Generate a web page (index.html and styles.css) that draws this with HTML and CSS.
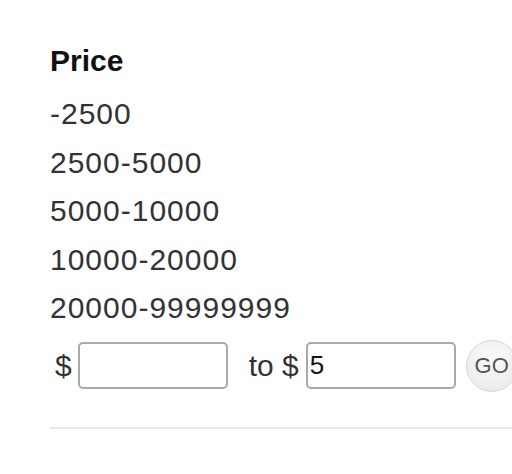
FILE: index.html
```html
<!DOCTYPE html>
<html lang="en">
<head>
    <meta charset="UTF-8">
    <title>Price filter</title>
    <link rel="stylesheet" href="styles.css">
</head>
<body>
    <div class="filter">
        <h3 class="filter-title">Price</h3>
        <ul class="price-list">
            <li><a href="#">-2500</a></li>
            <li><a href="#">2500-5000</a></li>
            <li><a href="#">5000-10000</a></li>
            <li><a href="#">10000-20000</a></li>
            <li><a href="#">20000-99999999</a></li>
        </ul>
        <form class="price-range">
            <span class="currency">$</span>
            <input type="text" class="range-input">
            <span class="to">to $</span>
            <input type="text" class="range-input" value="5">
            <button type="submit" class="go-btn">GO</button>
        </form>
        <div class="divider"></div>
    </div>
</body>
</html>
```

FILE: styles.css
```css
* {
    margin: 0;
    padding: 0;
    box-sizing: border-box;
}

body {
    font-family: "Liberation Sans", Arial, sans-serif;
    background: #fff;
    color: #333;
    overflow: hidden;
}

.filter {
    padding: 36px 0 0 50px;
}

.filter-title {
    font-size: 30px;
    font-weight: bold;
    line-height: 50px;
    margin-bottom: 4px;
    color: #111;
}

.price-list {
    list-style: none;
}

.price-list li {
    font-size: 30px;
    line-height: 48.5px;
    letter-spacing: 1px;
}

.price-list a {
    color: #333;
    text-decoration: none;
}

.price-range {
    display: flex;
    align-items: center;
    margin-top: 7px;
    font-size: 30px;
    white-space: nowrap;
}

.currency {
    margin-left: 5px;
    margin-right: 6px;
}

.to {
    margin-left: 21px;
    margin-right: 7px;
}

.range-input {
    width: 150px;
    height: 47px;
    border: 2px solid #a9a9a9;
    border-radius: 5px;
    padding: 0 2px;
    font-family: inherit;
    font-size: 26px;
    color: #111;
    flex-shrink: 0;
}

.go-btn {
    width: 52px;
    height: 52px;
    margin-left: 10px;
    border-radius: 50%;
    border: 1px solid #d6d6d6;
    background: radial-gradient(circle at 50% 35%, #fafafa, #e8e8e8);
    color: #555;
    font-family: inherit;
    font-size: 22px;
    flex-shrink: 0;
    cursor: pointer;
}

.divider {
    margin-top: 35px;
    height: 2px;
    background: #e6e6e6;
}
```
